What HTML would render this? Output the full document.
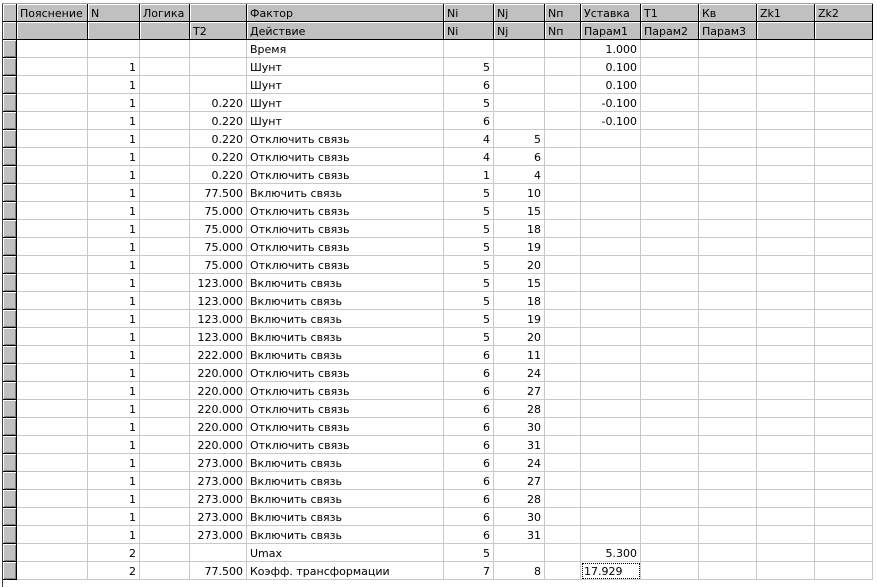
<!DOCTYPE html>
<html><head><meta charset="utf-8"><style>
html,body{margin:0;padding:0;background:#fff;width:877px;height:586px;overflow:hidden}
.wrap{position:absolute;left:2px;top:3px;border-left:1px solid #404040;border-top:1px solid #a0a0a0;height:583px}
table{border-collapse:separate;border-spacing:0;table-layout:fixed;font-family:"DejaVu Sans","Liberation Sans",sans-serif;font-size:11px;color:#000}
td{height:18px;padding:2px 3px 0 3px;border-right:1px solid #c8c8c8;border-bottom:1px solid #c8c8c8;white-space:nowrap;overflow:hidden;line-height:15px;box-sizing:border-box;text-align:right;vertical-align:top}
td.l{text-align:left}
tr.h td{background:#c0c0c0;border-right:1px solid #000;border-bottom:1px solid #000;box-shadow:inset 1px 1px 0 #fff;text-align:left}
td.i{background:#c0c0c0;border-right:1px solid #000;border-bottom:1px solid #000;box-shadow:inset 1px 1px 0 #fff,inset -1px -1px 0 #808080;padding:0}
tr{height:18px}
.f{outline:1px dotted #000;outline-offset:-2px}
</style></head><body><div class="wrap"><table>
<colgroup><col style="width:14px"><col style="width:71px"><col style="width:52px"><col style="width:50px"><col style="width:57px"><col style="width:197px"><col style="width:50px"><col style="width:51px"><col style="width:36px"><col style="width:60px"><col style="width:58px"><col style="width:58px"><col style="width:58px"><col style="width:58px"></colgroup>
<tr class="h"><td></td><td>Пояснение</td><td>N</td><td>Логика</td><td></td><td>Фактор</td><td>Ni</td><td>Nj</td><td>Nп</td><td>Уставка</td><td>T1</td><td>Кв</td><td>Zk1</td><td>Zk2</td></tr>
<tr class="h"><td></td><td></td><td></td><td></td><td>T2</td><td>Действие</td><td>Ni</td><td>Nj</td><td>Nп</td><td>Парам1</td><td>Парам2</td><td>Парам3</td><td></td><td></td></tr>
<tr><td class="i"></td><td></td><td></td><td></td><td></td><td class="l">Время</td><td></td><td></td><td></td><td>1.000</td><td></td><td></td><td></td><td></td></tr>
<tr><td class="i"></td><td></td><td>1</td><td></td><td></td><td class="l">Шунт</td><td>5</td><td></td><td></td><td>0.100</td><td></td><td></td><td></td><td></td></tr>
<tr><td class="i"></td><td></td><td>1</td><td></td><td></td><td class="l">Шунт</td><td>6</td><td></td><td></td><td>0.100</td><td></td><td></td><td></td><td></td></tr>
<tr><td class="i"></td><td></td><td>1</td><td></td><td>0.220</td><td class="l">Шунт</td><td>5</td><td></td><td></td><td>-0.100</td><td></td><td></td><td></td><td></td></tr>
<tr><td class="i"></td><td></td><td>1</td><td></td><td>0.220</td><td class="l">Шунт</td><td>6</td><td></td><td></td><td>-0.100</td><td></td><td></td><td></td><td></td></tr>
<tr><td class="i"></td><td></td><td>1</td><td></td><td>0.220</td><td class="l">Отключить связь</td><td>4</td><td>5</td><td></td><td></td><td></td><td></td><td></td><td></td></tr>
<tr><td class="i"></td><td></td><td>1</td><td></td><td>0.220</td><td class="l">Отключить связь</td><td>4</td><td>6</td><td></td><td></td><td></td><td></td><td></td><td></td></tr>
<tr><td class="i"></td><td></td><td>1</td><td></td><td>0.220</td><td class="l">Отключить связь</td><td>1</td><td>4</td><td></td><td></td><td></td><td></td><td></td><td></td></tr>
<tr><td class="i"></td><td></td><td>1</td><td></td><td>77.500</td><td class="l">Включить связь</td><td>5</td><td>10</td><td></td><td></td><td></td><td></td><td></td><td></td></tr>
<tr><td class="i"></td><td></td><td>1</td><td></td><td>75.000</td><td class="l">Отключить связь</td><td>5</td><td>15</td><td></td><td></td><td></td><td></td><td></td><td></td></tr>
<tr><td class="i"></td><td></td><td>1</td><td></td><td>75.000</td><td class="l">Отключить связь</td><td>5</td><td>18</td><td></td><td></td><td></td><td></td><td></td><td></td></tr>
<tr><td class="i"></td><td></td><td>1</td><td></td><td>75.000</td><td class="l">Отключить связь</td><td>5</td><td>19</td><td></td><td></td><td></td><td></td><td></td><td></td></tr>
<tr><td class="i"></td><td></td><td>1</td><td></td><td>75.000</td><td class="l">Отключить связь</td><td>5</td><td>20</td><td></td><td></td><td></td><td></td><td></td><td></td></tr>
<tr><td class="i"></td><td></td><td>1</td><td></td><td>123.000</td><td class="l">Включить связь</td><td>5</td><td>15</td><td></td><td></td><td></td><td></td><td></td><td></td></tr>
<tr><td class="i"></td><td></td><td>1</td><td></td><td>123.000</td><td class="l">Включить связь</td><td>5</td><td>18</td><td></td><td></td><td></td><td></td><td></td><td></td></tr>
<tr><td class="i"></td><td></td><td>1</td><td></td><td>123.000</td><td class="l">Включить связь</td><td>5</td><td>19</td><td></td><td></td><td></td><td></td><td></td><td></td></tr>
<tr><td class="i"></td><td></td><td>1</td><td></td><td>123.000</td><td class="l">Включить связь</td><td>5</td><td>20</td><td></td><td></td><td></td><td></td><td></td><td></td></tr>
<tr><td class="i"></td><td></td><td>1</td><td></td><td>222.000</td><td class="l">Включить связь</td><td>6</td><td>11</td><td></td><td></td><td></td><td></td><td></td><td></td></tr>
<tr><td class="i"></td><td></td><td>1</td><td></td><td>220.000</td><td class="l">Отключить связь</td><td>6</td><td>24</td><td></td><td></td><td></td><td></td><td></td><td></td></tr>
<tr><td class="i"></td><td></td><td>1</td><td></td><td>220.000</td><td class="l">Отключить связь</td><td>6</td><td>27</td><td></td><td></td><td></td><td></td><td></td><td></td></tr>
<tr><td class="i"></td><td></td><td>1</td><td></td><td>220.000</td><td class="l">Отключить связь</td><td>6</td><td>28</td><td></td><td></td><td></td><td></td><td></td><td></td></tr>
<tr><td class="i"></td><td></td><td>1</td><td></td><td>220.000</td><td class="l">Отключить связь</td><td>6</td><td>30</td><td></td><td></td><td></td><td></td><td></td><td></td></tr>
<tr><td class="i"></td><td></td><td>1</td><td></td><td>220.000</td><td class="l">Отключить связь</td><td>6</td><td>31</td><td></td><td></td><td></td><td></td><td></td><td></td></tr>
<tr><td class="i"></td><td></td><td>1</td><td></td><td>273.000</td><td class="l">Включить связь</td><td>6</td><td>24</td><td></td><td></td><td></td><td></td><td></td><td></td></tr>
<tr><td class="i"></td><td></td><td>1</td><td></td><td>273.000</td><td class="l">Включить связь</td><td>6</td><td>27</td><td></td><td></td><td></td><td></td><td></td><td></td></tr>
<tr><td class="i"></td><td></td><td>1</td><td></td><td>273.000</td><td class="l">Включить связь</td><td>6</td><td>28</td><td></td><td></td><td></td><td></td><td></td><td></td></tr>
<tr><td class="i"></td><td></td><td>1</td><td></td><td>273.000</td><td class="l">Включить связь</td><td>6</td><td>30</td><td></td><td></td><td></td><td></td><td></td><td></td></tr>
<tr><td class="i"></td><td></td><td>1</td><td></td><td>273.000</td><td class="l">Включить связь</td><td>6</td><td>31</td><td></td><td></td><td></td><td></td><td></td><td></td></tr>
<tr><td class="i"></td><td></td><td>2</td><td></td><td></td><td class="l">Umax</td><td>5</td><td></td><td></td><td>5.300</td><td></td><td></td><td></td><td></td></tr>
<tr><td class="i"></td><td></td><td>2</td><td></td><td>77.500</td><td class="l">Коэфф. трансформации</td><td>7</td><td>8</td><td></td><td class="l f">17.929</td><td></td><td></td><td></td><td></td></tr>
</table></div></body></html>
